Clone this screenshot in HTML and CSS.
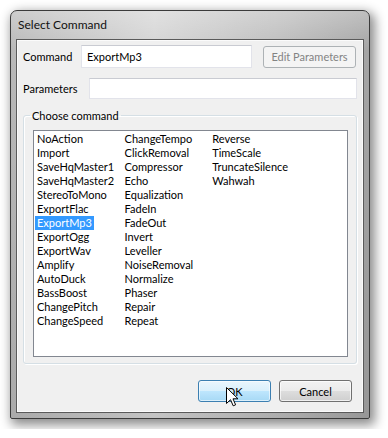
FILE: index.html
```html
<!DOCTYPE html>
<html lang="en">

<head>
  <meta charset="UTF-8" />
  <title>Select Command</title>
  <link rel="stylesheet" href="styles.css">
</head>

<body>
  <div id="window">
    <div id="titlebar">Select Command</div>
    <div id="client">
      <div class="row">
        <label class="lbl-command" for="command">Command</label>
        <input type="text" id="command" class="cmd-input" value="ExportMp3" />
        <button class="btn btn-disabled" disabled>Edit Parameters</button>
      </div>
      <div class="row row-params">
        <label class="lbl-params" for="params">Parameters</label>
        <input type="text" id="params" class="params-input" />
      </div>
      <fieldset class="group">
        <legend>Choose command</legend>
        <ul class="listbox">
          <li>NoAction</li>
          <li>Import</li>
          <li>SaveHqMaster1</li>
          <li>SaveHqMaster2</li>
          <li>StereoToMono</li>
          <li>ExportFlac</li>
          <li class="selected">ExportMp3</li>
          <li>ExportOgg</li>
          <li>ExportWav</li>
          <li>Amplify</li>
          <li>AutoDuck</li>
          <li>BassBoost</li>
          <li>ChangePitch</li>
          <li>ChangeSpeed</li>
          <li>ChangeTempo</li>
          <li>ClickRemoval</li>
          <li>Compressor</li>
          <li>Echo</li>
          <li>Equalization</li>
          <li>FadeIn</li>
          <li>FadeOut</li>
          <li>Invert</li>
          <li>Leveller</li>
          <li>NoiseRemoval</li>
          <li>Normalize</li>
          <li>Phaser</li>
          <li>Repair</li>
          <li>Repeat</li>
          <li>Reverse</li>
          <li>TimeScale</li>
          <li>TruncateSilence</li>
          <li>Wahwah</li>
        </ul>
      </fieldset>
      <div class="buttons">
        <button class="btn btn-default">OK</button>
        <button class="btn">Cancel</button>
      </div>
    </div>
    <!-- mouse pointer over the OK button -->
    <svg class="cursor" width="13" height="20" viewBox="0 0 13 20">
      <path d="M0.5 0.5 L0.5 16.5 L4.5 12.7 L7.2 18.8 L9.6 17.8 L7 11.8 L12 11.8 Z" fill="#fff" stroke="#000"
        stroke-width="1" stroke-linejoin="miter" />
    </svg>
  </div>
</body>

</html>
```

FILE: styles.css
```css
body {
  margin: 0;
  padding: 10px;
  background-color: #fff;
  font-family: 'Lato', 'Liberation Sans', sans-serif;
  font-size: 11px;
  color: #000;
}

#window {
  position: relative;
  width: 348px;
  padding: 0 5px 5px 5px;
  border: 1px solid #3b3b3b;
  border-radius: 7px 7px 2px 2px;
  background:
    linear-gradient(180deg, rgba(255, 255, 255, 0.3), rgba(255, 255, 255, 0) 40px, rgba(0, 0, 0, 0.08)),
    linear-gradient(90deg, #b8b8b8, #d4d4d4 40%, #bcbcbc 75%, #a4a4a4);
  box-shadow: 3px 4px 11px 2px rgba(0, 0, 0, 0.45);
}

#titlebar {
  height: 28px;
  line-height: 28px;
  padding-left: 2px;
  font-size: 12px;
  color: #111;
}

#client {
  height: 372px;
  border: 1px solid #5a5a5a;
  background-color: #f0f0f0;
  box-shadow: inset 0 0 0 1px #fbfbfb;
  display: flex;
  flex-direction: column;
}

.row {
  display: flex;
  align-items: center;
  padding-left: 6px;
  margin-top: 5px;
  height: 23px;
}

.row-params {
  margin-top: 10px;
  height: 21px;
}

.lbl-command {
  width: 58px;
}

.lbl-params {
  width: 66px;
}

input[type="text"] {
  box-sizing: border-box;
  margin: 0;
  padding: 0 5px;
  border: 1px solid #e2e3ea;
  border-top-color: #c9cbd2;
  background-color: #fff;
  font-family: inherit;
  font-size: 11px;
  outline: none;
}

.cmd-input {
  width: 171px;
  height: 23px;
}

.params-input {
  width: 268px;
  height: 21px;
}

.btn {
  box-sizing: border-box;
  width: 73px;
  height: 22px;
  margin: 0;
  padding: 0;
  border: 1px solid #707070;
  border-radius: 3px;
  background: linear-gradient(180deg, #f2f2f2 0%, #ebebeb 50%, #dddddd 51%, #cfcfcf 100%);
  box-shadow: inset 0 0 0 1px rgba(255, 255, 255, 0.7);
  font-family: inherit;
  font-size: 11px;
  color: #000;
}

.btn-disabled {
  width: 93px;
  margin-left: 11px;
  border-color: #adb2b5;
  background: #f4f4f4;
  box-shadow: none;
  color: #838383;
}

.btn-default {
  border-color: #3c7fb1;
  background: linear-gradient(180deg, #eaf6fd 0%, #d9f0fc 50%, #bee6fd 51%, #a7d9f5 100%);
  box-shadow: inset 0 0 0 1px rgba(255, 255, 255, 0.6);
}

.group {
  margin: 9px 6px 0 6px;
  padding: 7px 8px 6px 9px;
  border: 1px solid #d5dfe5;
  border-radius: 3px;
  box-shadow: 1px 1px 0 #fff, inset 1px 1px 0 #fff;
  min-width: 0;
}

.group legend {
  margin-left: -3px;
  padding: 0 2px;
  line-height: 15px;
}

.listbox {
  list-style-type: none;
  margin: 0;
  padding: 1px 0 0 1px;
  height: 224px;
  border: 1px solid #828790;
  background-color: #fff;
  display: grid;
  grid-template-rows: repeat(14, 14px);
  grid-auto-flow: column;
  grid-auto-columns: 87.6px;
  align-content: start;
  justify-content: start;
}

.listbox li {
  justify-self: start;
  padding: 0 2px;
  line-height: 14px;
  height: 14px;
  white-space: nowrap;
}

.listbox li.selected {
  background-color: #3399ff;
  color: #fff;
}

.buttons {
  display: flex;
  justify-content: flex-end;
  gap: 8px;
  margin-top: 16px;
  padding-right: 11px;
}

.cursor {
  position: absolute;
  left: 215px;
  top: 376px;
}
```
